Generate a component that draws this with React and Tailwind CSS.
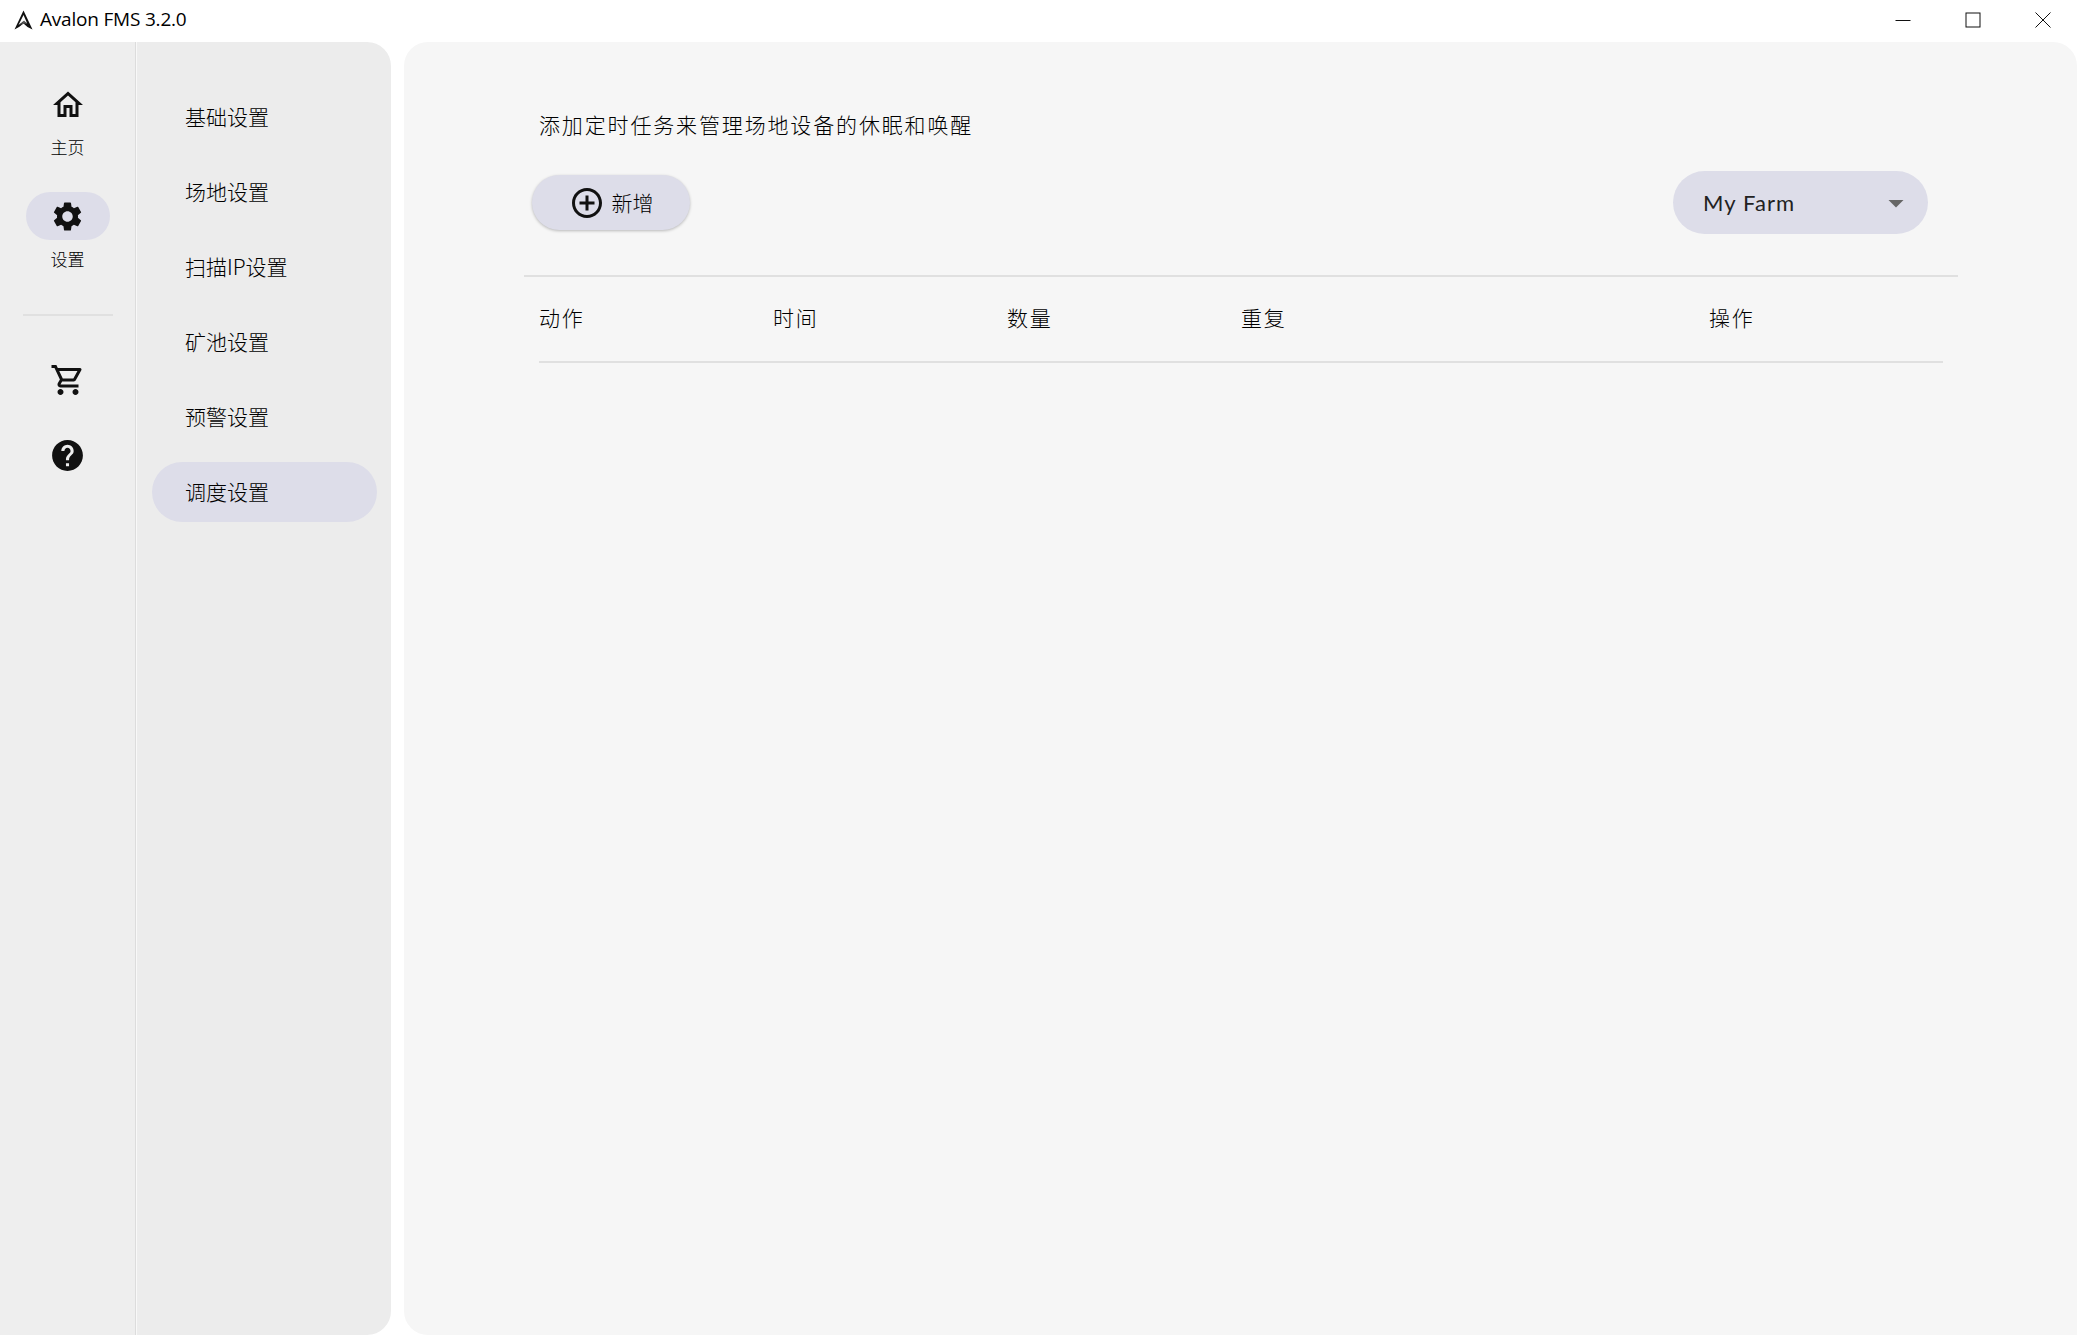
import { MdOutlineHome, MdSettings, MdOutlineShoppingCart, MdHelp, MdAddCircleOutline, MdArrowDropDown } from 'react-icons/md';

const cjk = '"Noto Sans CJK SC", "Noto Sans", sans-serif';

const subMenu = ['基础设置', '场地设置', '扫描IP设置', '矿池设置', '预警设置', '调度设置'];
const columns = [
  { label: '动作', width: 'w-[234px]' },
  { label: '时间', width: 'w-[234px]' },
  { label: '数量', width: 'w-[234px]' },
  { label: '重复', width: 'w-[468px]' },
  { label: '操作', width: 'w-[234px]' },
];

const TitleBar = () => (
  <div className="h-[42px] shrink-0 bg-white flex items-center justify-between">
    <div className="flex items-center pl-[14px]">
      <svg width="19" height="20" viewBox="0 0 19 20" className="-mt-[2px]">
        <path d="M9.5 0.5 L18.5 19.5 L13.5 17 L9.5 13.5 L5 17 L0.5 19.5 Z M9.5 5 L4.5 15 L9 11.5 L13 13 Z" fill="#111" fillRule="evenodd" />
        <path d="M6 15 L10 10.5 L13.5 14 L10 13.5 Z" fill="#555" />
      </svg>
      <span className="ml-[7px] -mt-[3px] text-[19px] text-black font-['Open_Sans',sans-serif] tracking-[-0.2px]">Avalon FMS 3.2.0</span>
    </div>
    <div className="flex items-center pr-[26px] gap-[54px] -mt-[3px]">
      <svg width="16" height="16" viewBox="0 0 16 16"><path d="M0.5 8.5 H15.5" stroke="#111" strokeWidth="1" /></svg>
      <svg width="16" height="16" viewBox="0 0 16 16"><rect x="1" y="1" width="14" height="14" fill="none" stroke="#111" strokeWidth="1" /></svg>
      <svg width="16" height="16" viewBox="0 0 16 16"><path d="M0.5 0.5 L15.5 15.5 M15.5 0.5 L0.5 15.5" stroke="#111" strokeWidth="1" /></svg>
    </div>
  </div>
);

const Rail = () => (
  <div className="w-[135px] shrink-0 bg-[#eeeeee] flex flex-col items-center pt-[45px]">
    <div className="h-[36px] flex items-center justify-center"><MdOutlineHome size={36} color="#111" /></div>
    <span className="mt-[12px] text-[17px] leading-[24px] text-black font-light">主页</span>
    <div className="mt-[33px] w-[84px] h-[48px] rounded-full bg-[#dddde9] flex items-center justify-center">
      <MdSettings size={35} color="#111" />
    </div>
    <span className="mt-[7px] text-[17px] leading-[24px] text-black font-light">设置</span>
    <div className="mt-[43px] w-[90px] h-[2px] bg-[#e0e0e0]" />
    <div className="mt-[46px] h-[36px] flex items-center"><MdOutlineShoppingCart size={36} color="#111" /></div>
    <div className="mt-[39px] h-[36px] flex items-center"><MdHelp size={37} color="#111" /></div>
  </div>
);

const SubNav = () => (
  <div className="w-[256px] shrink-0 bg-[#ececec] border-l border-[#dcdcdc] shadow-[inset_1px_0_0_#f8f8f8] rounded-r-[24px] pt-[45px] pl-[16px] pr-[14px] flex flex-col gap-[15px]">
    {subMenu.map((item, idx) => (
      <div
        key={item}
        className={`h-[60px] rounded-full flex items-center pl-[33px] text-[21px] font-light text-black ${idx === 5 ? 'bg-[#dddde9]' : ''}`}
      >
        {item}
      </div>
    ))}
  </div>
);

const Main = () => (
  <div className="flex-1 ml-[13px] bg-[#f6f6f6] rounded-tl-[24px] rounded-bl-[24px] rounded-tr-[24px] pt-[65px] pl-[120px] pr-[119px]">
    <p className="pl-[15px] text-[21px] leading-[34px] tracking-[1.85px] font-light text-black">添加定时任务来管理场地设备的休眠和唤醒</p>
    <div className="mt-[30px] flex items-center justify-between pl-[8px] pr-[30px]">
      <button className="w-[158px] h-[55px] rounded-full bg-[#dddde9] shadow-[0_1px_3px_rgba(0,0,0,0.25)] flex items-center justify-center gap-[7px] text-[21px] font-light text-black">
        <MdAddCircleOutline size={36} color="#111" />
        <span>新增</span>
      </button>
      <div className="w-[255px] h-[63px] rounded-full bg-[#dddde9] flex items-center justify-between pl-[30px] pr-[14px]">
        <span className="text-[22px] tracking-[1.1px] text-[#222] font-['Lato',sans-serif]">My Farm</span>
        <MdArrowDropDown size={36} color="#666" />
      </div>
    </div>
    <div className="mt-[41px] h-[2px] bg-[#e0e0e0]" />
    <div className="mx-[15px] h-[86px] pb-[2px] flex items-center border-b-2 border-[#e0e0e0] text-[21px] tracking-[1.8px] font-light text-black">
      {columns.map(col => (
        <div key={col.label} className={col.width}>{col.label}</div>
      ))}
    </div>
  </div>
);

export default function App() {
  return (
    <div className="w-[2077px] h-[1335px] bg-white flex flex-col overflow-hidden" style={{ fontFamily: cjk }}>
      <TitleBar />
      <div className="flex-1 flex min-h-0">
        <Rail />
        <SubNav />
        <Main />
      </div>
    </div>
  );
}
